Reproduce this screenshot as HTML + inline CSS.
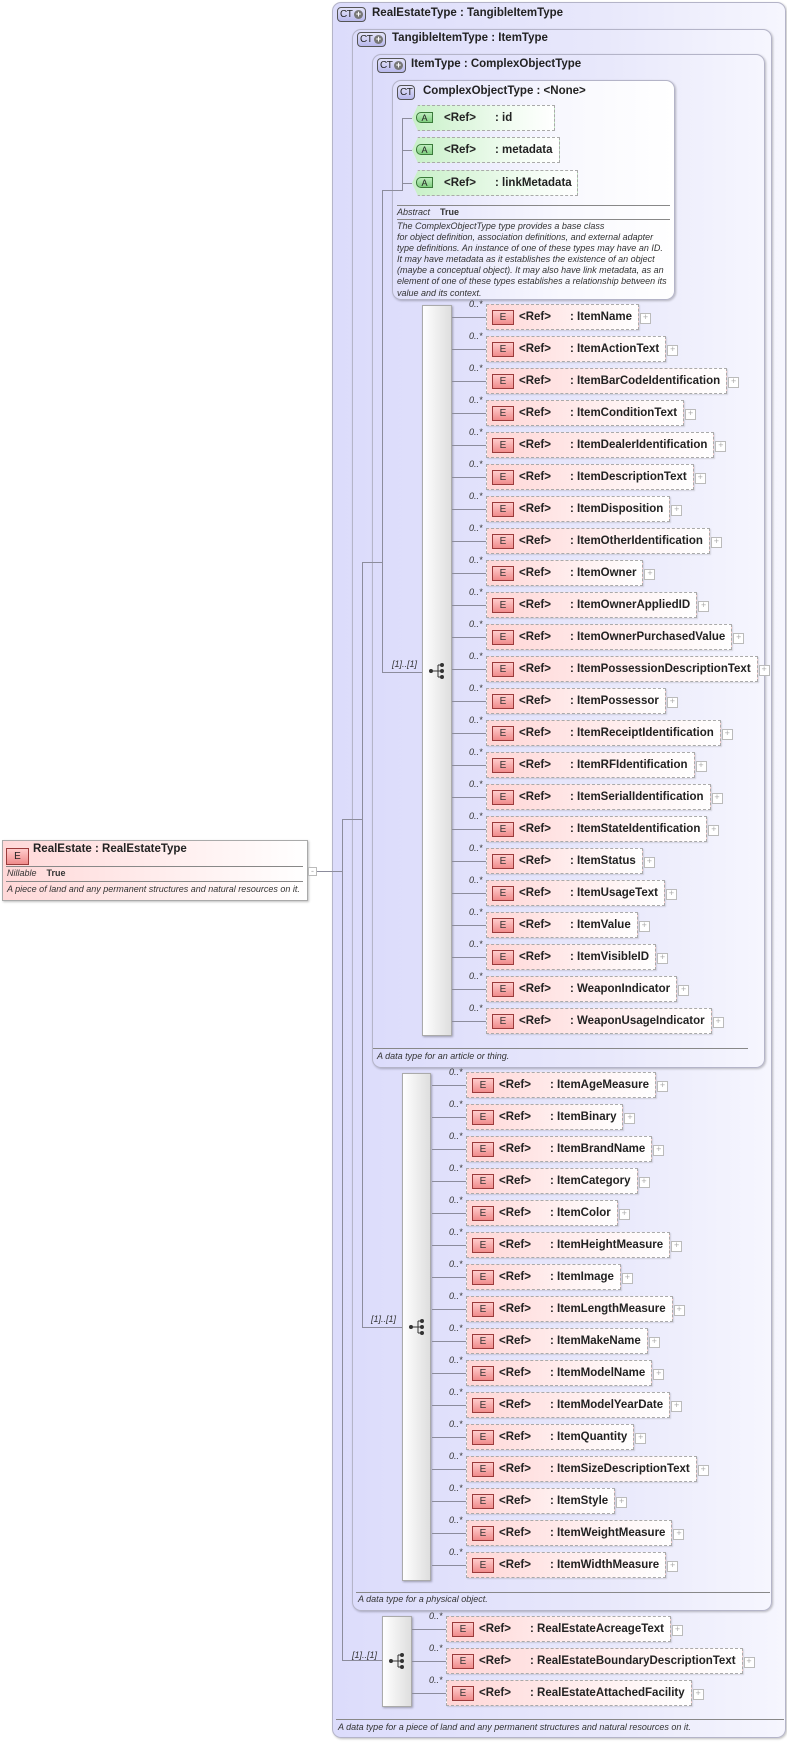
<!DOCTYPE html>
<html><head><meta charset="utf-8"><style>
*{box-sizing:border-box;margin:0;padding:0}
body{width:787px;height:1742px;background:#fff;position:relative;overflow:hidden;font-family:"Liberation Sans",sans-serif;color:#222}
.abs{position:absolute}
.bx{position:absolute;border:1px solid #b4b4c8;border-radius:9px;box-shadow:1px 1px 2px rgba(0,0,0,.25)}
.l{position:absolute;background:#8c8c9c}
.ct{position:absolute;height:15px;border:1px solid #555;border-radius:4px;background:linear-gradient(#e4e4fa,#b8b8ec);font-size:10px;line-height:13px;padding-left:2px;color:#222;letter-spacing:-0.5px}
.ct b{position:absolute;right:2px;top:2px;width:9px;height:9px;border-radius:50%;background:#777;color:#fff;font-size:9px;line-height:9px;text-align:center;font-weight:bold;letter-spacing:0}
.tt{position:absolute;font-size:11.5px;font-weight:bold;white-space:nowrap}
.r{position:absolute;height:26px;border:1px dashed #aaa;background:linear-gradient(to right,#ffd6d6,#fff4f4 70%,#fff);white-space:nowrap;font-size:11.5px;font-weight:bold;line-height:24px;padding-right:6px;box-shadow:1px 1px 1px rgba(0,0,0,.12)}
.r .e{display:inline-block;vertical-align:top;margin:5px 5px 0 5px;width:22px;height:15px;border:1px solid #9a3a3a;background:linear-gradient(#fcc,#f08c8c);font-weight:normal;font-size:10px;line-height:13px;text-align:center;color:#333}
.r .ref{display:inline-block;width:51px}
.r i{position:absolute;left:-18px;top:-6px;font-size:9px;font-weight:normal;line-height:10px;color:#333}
.r::before{content:"";position:absolute;left:-35px;top:12px;width:34px;height:1px;background:#8c8c9c}
.r::after{content:"+";position:absolute;right:-13px;top:8px;width:9px;height:9px;border:1px solid #bbb;background:#fff;font-size:9px;line-height:7px;text-align:center;color:#aaa;font-weight:normal}
.a{position:absolute;left:412px;height:26px;border:1px dashed #aaa;border-left:none;background:linear-gradient(to right,#c8f0c8,#f2fcf2 70%,#fff);white-space:nowrap;font-size:11.5px;font-weight:bold;line-height:24px;padding-right:6px;padding-left:32px;clip-path:polygon(6px 0,100% 0,100% 100%,6px 100%,0 50%)}
.ai{position:absolute;left:416px;width:17px;height:11px;border:1px solid #3a7a3a;border-radius:5px 0 0 5px;background:linear-gradient(#bfeebf,#7fce7f);font-size:9px;line-height:10px;text-align:center}
.a .ref{display:inline-block;width:51px}
.sq{position:absolute;border:1px solid #aaa;background:linear-gradient(to right,#fff,#dedede);box-shadow:1px 1px 2px rgba(0,0,0,.3)}
.desc{position:absolute;font-size:9px;font-style:italic;color:#333;white-space:nowrap}
.hl{position:absolute;height:1px;background:#888}
.mul{position:absolute;font-size:9px;font-style:italic;color:#333}
</style></head><body>

<div class="bx" style="left:332px;top:2px;width:454px;height:1736px;background:linear-gradient(to right,#dcdcfb,#e8e8fb 60%,#f6f6fe)"></div>
<div class="ct" style="left:337px;top:7px;width:29px">CT<b>+</b></div>
<div class="tt" style="left:372px;top:7px">RealEstateType : TangibleItemType</div>

<div class="bx" style="left:352px;top:29px;width:420px;height:1582px;background:linear-gradient(to right,#dcdcfb,#e8e8fb 60%,#f6f6fe)"></div>
<div class="ct" style="left:357px;top:32px;width:29px">CT<b>+</b></div>
<div class="tt" style="left:392px;top:32px">TangibleItemType : ItemType</div>

<div class="bx" style="left:372px;top:54px;width:393px;height:1014px;background:linear-gradient(to right,#dcdcfb,#e8e8fb 60%,#f6f6fe)"></div>
<div class="ct" style="left:377px;top:58px;width:29px">CT<b>+</b></div>
<div class="tt" style="left:411px;top:58px">ItemType : ComplexObjectType</div>

<div class="bx" style="left:392px;top:80px;width:283px;height:220px;background:linear-gradient(to right,#e0e0fb,#f8f8fe 60%,#fff)"></div>
<div class="ct" style="left:397px;top:85px;width:18px">CT</div>
<div class="tt" style="left:423px;top:85px">ComplexObjectType : &lt;None&gt;</div>

<div class="a" style="top:105px;width:143px"><span class="ref">&lt;Ref&gt;</span>: id</div>
<div class="ai" style="top:112px">A</div>
<div class="a" style="top:137px;width:148px"><span class="ref">&lt;Ref&gt;</span>: metadata</div>
<div class="ai" style="top:144px">A</div>
<div class="a" style="top:170px;width:166px"><span class="ref">&lt;Ref&gt;</span>: linkMetadata</div>
<div class="ai" style="top:177px">A</div>

<div class="hl" style="left:397px;top:205px;width:273px"></div>
<div class="desc" style="left:397px;top:207px">Abstract&nbsp;&nbsp;&nbsp;&nbsp;<b style="font-style:normal">True</b></div>
<div class="hl" style="left:397px;top:219px;width:273px"></div>
<div class="desc" style="left:397px;top:221px;line-height:11.1px">The ComplexObjectType type provides a base class<br>for object definition, association definitions, and external adapter<br>type definitions. An instance of one of these types may have an ID.<br>It may have metadata as it establishes the existence of an object<br>(maybe a conceptual object). It may also have link metadata, as an<br>element of one of these types establishes a relationship between its<br>value and its context.</div>

<div class="l" style="left:316px;top:871px;width:27px;height:1px"></div>
<div class="l" style="left:342px;top:819px;width:1px;height:842px"></div>
<div class="l" style="left:342px;top:819px;width:20px;height:1px"></div>
<div class="l" style="left:342px;top:1660px;width:40px;height:1px"></div>
<div class="l" style="left:362px;top:562px;width:1px;height:766px"></div>
<div class="l" style="left:362px;top:562px;width:20px;height:1px"></div>
<div class="l" style="left:362px;top:1327px;width:40px;height:1px"></div>
<div class="l" style="left:382px;top:190px;width:1px;height:483px"></div>
<div class="l" style="left:382px;top:190px;width:20px;height:1px"></div>
<div class="l" style="left:382px;top:672px;width:40px;height:1px"></div>
<div class="l" style="left:402px;top:118px;width:1px;height:73px"></div>
<div class="l" style="left:402px;top:118px;width:10px;height:1px"></div>
<div class="l" style="left:402px;top:150px;width:10px;height:1px"></div>
<div class="l" style="left:402px;top:183px;width:10px;height:1px"></div>

<div class="abs" style="left:2px;top:840px;width:306px;height:61px;border:1px solid #aaa;background:linear-gradient(to right,#ffd8d8,#fff0f0 60%,#fff);box-shadow:1px 1px 2px rgba(0,0,0,.25)"></div>
<div class="abs" style="left:6px;top:848px;width:23px;height:17px;border:1px solid #9a3a3a;background:linear-gradient(#fcc,#f08c8c);font-size:10px;line-height:15px;text-align:center">E</div>
<div class="tt" style="left:33px;top:843px">RealEstate : RealEstateType</div>
<div class="hl" style="left:6px;top:866px;width:297px"></div>
<div class="desc" style="left:7px;top:868px">Nillable&nbsp;&nbsp;&nbsp;&nbsp;<b style="font-style:normal">True</b></div>
<div class="hl" style="left:6px;top:881px;width:297px"></div>
<div class="desc" style="left:7px;top:884px">A piece of land and any permanent structures and natural resources on it.</div>
<div class="abs" style="left:308px;top:867px;width:9px;height:9px;border:1px solid #bbb;background:#fff;font-size:9px;line-height:6px;text-align:center;color:#aaa">-</div>

<div class="sq" style="left:422px;top:305px;width:30px;height:731px"></div>
<div class="mul" style="left:392px;top:659px">[1]..[1]</div>
<svg class="abs" style="left:428px;top:662px" width="18" height="18"><line x1="3" y1="9" x2="10" y2="9" stroke="#333"/><line x1="10" y1="3" x2="10" y2="15" stroke="#333"/><line x1="10" y1="3" x2="14" y2="3" stroke="#333"/><line x1="10" y1="15" x2="14" y2="15" stroke="#333"/><line x1="10" y1="9" x2="14" y2="9" stroke="#333"/><circle cx="3" cy="9" r="2" fill="#333"/><circle cx="14" cy="3" r="2" fill="#333"/><circle cx="14" cy="9" r="2" fill="#333"/><circle cx="14" cy="15" r="2" fill="#333"/></svg>

<div class="sq" style="left:402px;top:1073px;width:29px;height:508px"></div>
<div class="mul" style="left:371px;top:1314px">[1]..[1]</div>
<svg class="abs" style="left:408px;top:1318px" width="18" height="18"><line x1="3" y1="9" x2="10" y2="9" stroke="#333"/><line x1="10" y1="3" x2="10" y2="15" stroke="#333"/><line x1="10" y1="3" x2="14" y2="3" stroke="#333"/><line x1="10" y1="15" x2="14" y2="15" stroke="#333"/><line x1="10" y1="9" x2="14" y2="9" stroke="#333"/><circle cx="3" cy="9" r="2" fill="#333"/><circle cx="14" cy="3" r="2" fill="#333"/><circle cx="14" cy="9" r="2" fill="#333"/><circle cx="14" cy="15" r="2" fill="#333"/></svg>

<div class="sq" style="left:382px;top:1616px;width:30px;height:91px"></div>
<div class="mul" style="left:352px;top:1650px">[1]..[1]</div>
<svg class="abs" style="left:388px;top:1652px" width="18" height="18"><line x1="3" y1="9" x2="10" y2="9" stroke="#333"/><line x1="10" y1="3" x2="10" y2="15" stroke="#333"/><line x1="10" y1="3" x2="14" y2="3" stroke="#333"/><line x1="10" y1="15" x2="14" y2="15" stroke="#333"/><line x1="10" y1="9" x2="14" y2="9" stroke="#333"/><circle cx="3" cy="9" r="2" fill="#333"/><circle cx="14" cy="3" r="2" fill="#333"/><circle cx="14" cy="9" r="2" fill="#333"/><circle cx="14" cy="15" r="2" fill="#333"/></svg>

<div class="r" style="left:486px;top:304px"><i>0..*</i><b class="e">E</b><span class="ref">&lt;Ref&gt;</span>: ItemName</div>
<div class="r" style="left:486px;top:336px"><i>0..*</i><b class="e">E</b><span class="ref">&lt;Ref&gt;</span>: ItemActionText</div>
<div class="r" style="left:486px;top:368px"><i>0..*</i><b class="e">E</b><span class="ref">&lt;Ref&gt;</span>: ItemBarCodeIdentification</div>
<div class="r" style="left:486px;top:400px"><i>0..*</i><b class="e">E</b><span class="ref">&lt;Ref&gt;</span>: ItemConditionText</div>
<div class="r" style="left:486px;top:432px"><i>0..*</i><b class="e">E</b><span class="ref">&lt;Ref&gt;</span>: ItemDealerIdentification</div>
<div class="r" style="left:486px;top:464px"><i>0..*</i><b class="e">E</b><span class="ref">&lt;Ref&gt;</span>: ItemDescriptionText</div>
<div class="r" style="left:486px;top:496px"><i>0..*</i><b class="e">E</b><span class="ref">&lt;Ref&gt;</span>: ItemDisposition</div>
<div class="r" style="left:486px;top:528px"><i>0..*</i><b class="e">E</b><span class="ref">&lt;Ref&gt;</span>: ItemOtherIdentification</div>
<div class="r" style="left:486px;top:560px"><i>0..*</i><b class="e">E</b><span class="ref">&lt;Ref&gt;</span>: ItemOwner</div>
<div class="r" style="left:486px;top:592px"><i>0..*</i><b class="e">E</b><span class="ref">&lt;Ref&gt;</span>: ItemOwnerAppliedID</div>
<div class="r" style="left:486px;top:624px"><i>0..*</i><b class="e">E</b><span class="ref">&lt;Ref&gt;</span>: ItemOwnerPurchasedValue</div>
<div class="r" style="left:486px;top:656px"><i>0..*</i><b class="e">E</b><span class="ref">&lt;Ref&gt;</span>: ItemPossessionDescriptionText</div>
<div class="r" style="left:486px;top:688px"><i>0..*</i><b class="e">E</b><span class="ref">&lt;Ref&gt;</span>: ItemPossessor</div>
<div class="r" style="left:486px;top:720px"><i>0..*</i><b class="e">E</b><span class="ref">&lt;Ref&gt;</span>: ItemReceiptIdentification</div>
<div class="r" style="left:486px;top:752px"><i>0..*</i><b class="e">E</b><span class="ref">&lt;Ref&gt;</span>: ItemRFIdentification</div>
<div class="r" style="left:486px;top:784px"><i>0..*</i><b class="e">E</b><span class="ref">&lt;Ref&gt;</span>: ItemSerialIdentification</div>
<div class="r" style="left:486px;top:816px"><i>0..*</i><b class="e">E</b><span class="ref">&lt;Ref&gt;</span>: ItemStateIdentification</div>
<div class="r" style="left:486px;top:848px"><i>0..*</i><b class="e">E</b><span class="ref">&lt;Ref&gt;</span>: ItemStatus</div>
<div class="r" style="left:486px;top:880px"><i>0..*</i><b class="e">E</b><span class="ref">&lt;Ref&gt;</span>: ItemUsageText</div>
<div class="r" style="left:486px;top:912px"><i>0..*</i><b class="e">E</b><span class="ref">&lt;Ref&gt;</span>: ItemValue</div>
<div class="r" style="left:486px;top:944px"><i>0..*</i><b class="e">E</b><span class="ref">&lt;Ref&gt;</span>: ItemVisibleID</div>
<div class="r" style="left:486px;top:976px"><i>0..*</i><b class="e">E</b><span class="ref">&lt;Ref&gt;</span>: WeaponIndicator</div>
<div class="r" style="left:486px;top:1008px"><i>0..*</i><b class="e">E</b><span class="ref">&lt;Ref&gt;</span>: WeaponUsageIndicator</div>
<div class="hl" style="left:373px;top:1048px;width:375px"></div>
<div class="desc" style="left:377px;top:1051px">A data type for an article or thing.</div>

<div class="r" style="left:466px;top:1072px"><i>0..*</i><b class="e">E</b><span class="ref">&lt;Ref&gt;</span>: ItemAgeMeasure</div>
<div class="r" style="left:466px;top:1104px"><i>0..*</i><b class="e">E</b><span class="ref">&lt;Ref&gt;</span>: ItemBinary</div>
<div class="r" style="left:466px;top:1136px"><i>0..*</i><b class="e">E</b><span class="ref">&lt;Ref&gt;</span>: ItemBrandName</div>
<div class="r" style="left:466px;top:1168px"><i>0..*</i><b class="e">E</b><span class="ref">&lt;Ref&gt;</span>: ItemCategory</div>
<div class="r" style="left:466px;top:1200px"><i>0..*</i><b class="e">E</b><span class="ref">&lt;Ref&gt;</span>: ItemColor</div>
<div class="r" style="left:466px;top:1232px"><i>0..*</i><b class="e">E</b><span class="ref">&lt;Ref&gt;</span>: ItemHeightMeasure</div>
<div class="r" style="left:466px;top:1264px"><i>0..*</i><b class="e">E</b><span class="ref">&lt;Ref&gt;</span>: ItemImage</div>
<div class="r" style="left:466px;top:1296px"><i>0..*</i><b class="e">E</b><span class="ref">&lt;Ref&gt;</span>: ItemLengthMeasure</div>
<div class="r" style="left:466px;top:1328px"><i>0..*</i><b class="e">E</b><span class="ref">&lt;Ref&gt;</span>: ItemMakeName</div>
<div class="r" style="left:466px;top:1360px"><i>0..*</i><b class="e">E</b><span class="ref">&lt;Ref&gt;</span>: ItemModelName</div>
<div class="r" style="left:466px;top:1392px"><i>0..*</i><b class="e">E</b><span class="ref">&lt;Ref&gt;</span>: ItemModelYearDate</div>
<div class="r" style="left:466px;top:1424px"><i>0..*</i><b class="e">E</b><span class="ref">&lt;Ref&gt;</span>: ItemQuantity</div>
<div class="r" style="left:466px;top:1456px"><i>0..*</i><b class="e">E</b><span class="ref">&lt;Ref&gt;</span>: ItemSizeDescriptionText</div>
<div class="r" style="left:466px;top:1488px"><i>0..*</i><b class="e">E</b><span class="ref">&lt;Ref&gt;</span>: ItemStyle</div>
<div class="r" style="left:466px;top:1520px"><i>0..*</i><b class="e">E</b><span class="ref">&lt;Ref&gt;</span>: ItemWeightMeasure</div>
<div class="r" style="left:466px;top:1552px"><i>0..*</i><b class="e">E</b><span class="ref">&lt;Ref&gt;</span>: ItemWidthMeasure</div>
<div class="hl" style="left:356px;top:1592px;width:414px"></div>
<div class="desc" style="left:358px;top:1594px">A data type for a physical object.</div>

<div class="r" style="left:446px;top:1616px"><i>0..*</i><b class="e">E</b><span class="ref">&lt;Ref&gt;</span>: RealEstateAcreageText</div>
<div class="r" style="left:446px;top:1648px"><i>0..*</i><b class="e">E</b><span class="ref">&lt;Ref&gt;</span>: RealEstateBoundaryDescriptionText</div>
<div class="r" style="left:446px;top:1680px"><i>0..*</i><b class="e">E</b><span class="ref">&lt;Ref&gt;</span>: RealEstateAttachedFacility</div>
<div class="hl" style="left:336px;top:1719px;width:448px"></div>
<div class="desc" style="left:338px;top:1722px">A data type for a piece of land and any permanent structures and natural resources on it.</div>

</body></html>
